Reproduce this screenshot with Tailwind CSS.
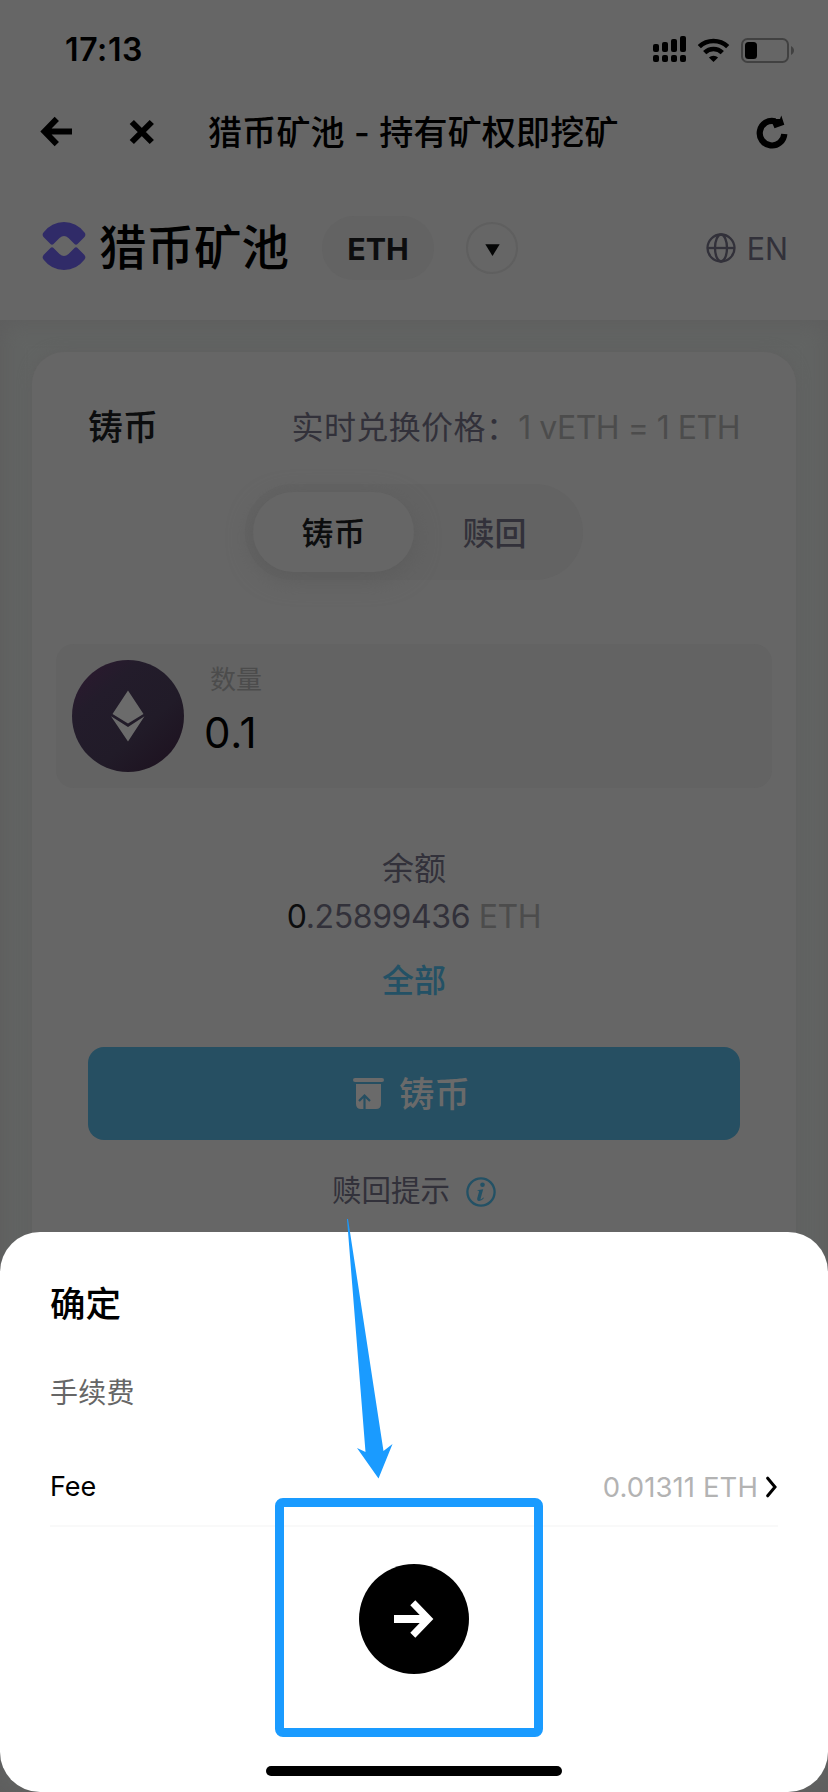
<!DOCTYPE html>
<html lang="zh-CN">
<head>
<meta charset="utf-8">
<title>猎币矿池</title>
<script src="https://cdn.jsdelivr.net/npm/@tailwindcss/browser@4"></script>
</head>
<body class="bg-[#666]">
<div class="relative w-[828px] h-[1792px] overflow-hidden bg-[#666] text-black font-['Inter','Noto_Sans_CJK_SC',sans-serif] whitespace-nowrap">

  <!-- status bar -->
  <div class="flex items-center h-[99px] pl-[65px] pr-[34px]">
    <span class="text-[32px] leading-8 pt-[1px] font-semibold tracking-[0.600px]">17:13</span>
    <div class="ml-auto flex items-center">
      <svg class="w-[141px] h-[28px]" viewBox="653 35 141 28">
        <g fill="#000">
          <rect x="653" y="43" width="6" height="8" rx="2"/><rect x="662" y="41" width="6" height="10" rx="2"/><rect x="671" y="38" width="6" height="13" rx="2"/><rect x="680" y="35" width="6" height="16" rx="2"/>
          <rect x="653" y="54" width="6" height="7" rx="2"/><rect x="662" y="54" width="6" height="7" rx="2"/><rect x="671" y="54" width="6" height="7" rx="2"/><rect x="680" y="54" width="6" height="7" rx="2"/>
          <path d="M713.500 61l-4.600-4.500a6.600 6.600 0 0 1 9.200 0z"/>
        </g>
        <g fill="none" stroke="#000" stroke-width="4.600"><path d="M699.300 45.700a20.500 20.500 0 0 1 28.400 0"/><path d="M704.700 51.600a12.600 12.600 0 0 1 17.600 0"/></g>
        <rect x="742" y="38" width="46" height="23" rx="5.500" fill="none" stroke="#414141" stroke-width="2"/>
        <rect x="745" y="41" width="12" height="17" rx="3.500" fill="#000"/>
        <path d="M791 45c4 2 4 7 0 9z" fill="#414141"/>
      </svg>
    </div>
  </div>

  <!-- browser bar -->
  <div class="flex items-center h-[66px] pl-[40px] pr-[39px]">
    <svg class="w-[33px] h-[32px]" viewBox="40 116 33 32" fill="none" stroke="#000" stroke-width="6"><path d="M45 131.500h27M56.800 118.800L44.500 131.500l12.300 12.700"/></svg>
    <svg class="ml-[56px] w-[26px] h-[26px]" viewBox="129 119 26 26" fill="none" stroke="#000" stroke-width="6"><path d="M131.800 122l20 20M151.800 122l-20 20"/></svg>
    <span class="ml-[53px] pt-[2px] text-[34px] leading-[34px] font-medium tracking-[0.2px]">猎币矿池 - 持有矿权即挖矿</span>
    <svg class="ml-auto w-[34px] h-[34px]" viewBox="755 115 34 34"><path d="M775.200 121.300A12.300 12.300 0 1 0 784.300 134" fill="none" stroke="#000" stroke-width="6.200"/><path d="M770.500 119l9.500 0 1.300-3.500 3 9.200-9.800 3.500z" fill="#000"/></svg>
  </div>

  <!-- site header -->
  <header class="flex items-center h-[155px] pt-[11px] pl-[42px] pr-[40px]">
    <svg class="-mt-[4px] w-[44px] h-[50px]" viewBox="42 221 44 50" fill="#302b68"><path d="M43.500 232.500q-2 2.500 .5 5l6.500 6.500q1.500 1.500 3 0l6-6q4.500-4 9 0l6 6q1.500 1.500 3 0l6.500-6.500q2.500-2.500 .5-5-8-10.500-20.500-10.500t-20.500 10.500z"/><path d="M43.500 259.500q-2-2.500 .5-5l6.500-6.500q1.500-1.500 3 0l6 6q4.500 4 9 0l6-6q1.500-1.500 3 0l6.500 6.500q2.500 2.500 .5 5-8 10.500-20.500 10.500t-20.500-10.500z"/></svg>
    <span class="ml-[13px] text-[47.500px] leading-[48px] font-medium">猎币矿池</span>
    <div class="ml-[33px] w-[112px] h-[64px] pt-[1px] rounded-full bg-[#636363] flex items-center justify-center text-[30.500px] font-bold text-[#0c0d0e]">ETH</div>
    <div class="ml-[32px] w-[52px] h-[52px] rounded-full border-2 border-[#5f5f5f] flex items-center justify-center">
      <svg class="w-[15px] h-[12px] mt-[3px]" viewBox="0 0 15 12"><path d="M.3.300h14.400L7.500 12z" fill="#050606"/></svg>
    </div>
    <svg class="ml-auto w-[30px] h-[30px]" viewBox="0 0 30 30" fill="none" stroke="#32313a" stroke-width="2.300"><circle cx="15" cy="15" r="13.500"/><ellipse cx="15" cy="15" rx="6" ry="13.500"/><path d="M1.500 15h27"/></svg>
    <span class="ml-[11px] pt-[1px] text-[30.500px] leading-8 text-[#32313a]">EN</span>
  </header>

  <!-- page body -->
  <main class="h-[1472px] px-8 pt-8 bg-[#626463] shadow-[inset_0_0_20px_4px_#5e5e5e]">
    <section class="h-[1440px] rounded-[32px] bg-[#666] shadow-[0_0_14px_#5f5f5f] flex flex-col items-center">
      <div class="w-full flex items-center justify-between h-[68px] mt-10 pl-[56px] pr-[56px]">
        <h2 class="pt-[1px] text-[35px] leading-[34px] font-medium text-[#0c0d0e]">铸币</h2>
        <p class="text-[32px] leading-8 text-[#32313a] flex items-center mt-[3px]"><span class="tracking-[0.400px]">实时兑换价格：</span><span class="text-[#4c4c4c] tracking-[-0.500px]">1 vETH = 1 ETH</span></p>
      </div>
      <div class="mt-6 h-[96px] p-2 rounded-full bg-[#636363] flex text-[32px] font-medium">
        <div class="w-[161px] h-[80px] pt-[3px] rounded-full bg-[#666] shadow-[0_6px_24px_#5c5c5c] flex items-center justify-center text-[#0c0d0e]">铸币</div>
        <div class="w-[161px] h-[80px] pt-[3px] flex items-center justify-center text-[#32313a]">赎回</div>
      </div>
      <div class="mt-16 w-[716px] h-[144px] rounded-[18px] bg-[#636363] flex items-center pl-4">
        <svg class="w-[112px] h-[112px]" viewBox="0 0 112 112">
          <defs><linearGradient id="e" x1="0" y1="0" x2=".9" y2="1"><stop offset="0" stop-color="#2e1830"/><stop offset=".3" stop-color="#231c2b"/><stop offset=".65" stop-color="#211b28"/><stop offset="1" stop-color="#1d111f"/></linearGradient></defs>
          <circle cx="56" cy="56" r="56" fill="url(#e)"/>
          <path d="M56 30.500L71.500 54 56 63.500 40.500 54zM39 56.300L56 67l16.500-10.700L56 81.500z" fill="#6b6b6b"/>
        </svg>
        <div class="ml-[20px] h-full pt-[19px] flex flex-col">
          <span class="pl-[6px] text-[26px] leading-[34px] text-[#4c4c4c]">数量</span>
          <span class="mt-[12px] text-[42px] leading-[48px] tracking-[0.800px]">0.1</span>
        </div>
      </div>
      <div class="mt-[57px] text-[32px] leading-[48px] text-[#32313a]">余额</div>
      <div class="text-[32px] leading-[48px] text-[#32313a] tracking-[-0.400px]"><span class="text-[#0c0d0e]">0</span>.25899436<span class="text-[#4c4c4c]"> ETH</span></div>
      <div class="mt-4 text-[32px] leading-[48px] font-medium text-[#235165]">全部</div>
      <div class="mt-[42px] w-[652px] h-[93px] pr-[5px] rounded-2xl bg-[#264f62] text-[#6a6a6a] flex items-center justify-center gap-[15px]">
        <svg class="w-[31px] h-[32px]" viewBox="0 0 31 32"><rect x="0" y="0" width="31" height="4" rx="2" fill="#6a6a6a"/><path d="M3 6h25v20q0 5-5 5H8q-5 0-5-5z" fill="#6a6a6a"/><path d="M11.500 31V17.500M6 23l5.500-5.500L17 23" fill="none" stroke="#264f62" stroke-width="2.200"/></svg>
        <span class="pt-[2px] text-[35.500px] leading-[36px] font-medium">铸币</span>
      </div>
      <div class="mt-[28px] h-[42px] flex items-center text-[29.500px] text-[#32313a]">
        <span class="pt-[2px]">赎回提示</span>
        <svg class="ml-[16px] mt-[6px] w-[30px] h-[30px]" viewBox="0 0 30 30"><circle cx="15" cy="15" r="13.600" fill="none" stroke="#235165" stroke-width="2.300"/><circle cx="16.500" cy="7.700" r="2.300" fill="#235165"/><path d="M11 13.200l6.200-1-2.600 9.300q-.3 1.500 1 .6l1.800-1.700.6.700q-2.500 3.200-5 3-2.400-.3-1.700-3l1.700-6.300q.2-.9-.8-1z" fill="#235165"/></svg>
      </div>
    </section>
  </main>

  <!-- confirmation sheet -->
  <div class="absolute left-0 top-[1232px] w-full h-[560px] rounded-[40px] bg-white flex flex-col px-[50px]">
    <h3 class="mt-[49px] text-[35.500px] leading-[48px] font-medium">确定</h3>
    <p class="mt-[44px] text-[28px] leading-[40px] text-[#666] tracking-[0.200px]">手续费</p>
    <div class="mt-[53px] h-[61px] pb-[17px] border-b-2 border-[#f9f9f9] flex items-center text-[27.500px]">
      <span class="text-[27px]">Fee</span>
      <span class="ml-auto pt-[1px] text-[#b3b3b3] tracking-[0.100px]">0.01311 ETH</span>
      <svg class="ml-[8px] mr-[1px] w-[11px] h-[22px]" viewBox="0 0 11 22" fill="none" stroke="#000" stroke-width="3" stroke-linecap="round"><path d="M1.700 2.200L9 11l-7.300 8.800"/></svg>
    </div>
    <div class="self-center mt-[37px] w-[110px] h-[110px] rounded-full bg-black flex items-center justify-center">
      <svg class="w-[40px] h-[40px]" viewBox="0 0 40 40" fill="none" stroke="#fff" stroke-width="8"><path d="M0 20h34"/><path d="M18.800 3.800L34.500 20 18.800 36.200" stroke-width="7"/></svg>
    </div>
    <div class="self-center mt-[92px] w-[296px] h-[10px] rounded-full bg-black"></div>
  </div>

  <!-- callout marks -->
  <svg class="absolute left-[340px] top-[1215px] w-[60px] h-[270px]" viewBox="340 1215 60 270"><path d="M347 1219h1L383.500 1451l9-7-14 34.500-21.500-30.500 8.500 4z" fill="#1a9bff"/></svg>
  <div class="absolute left-[275px] top-[1498px] w-[268px] h-[239px] border-[9px] border-[#1a9bff] rounded-[8px]"></div>
</div>
</body>
</html>
